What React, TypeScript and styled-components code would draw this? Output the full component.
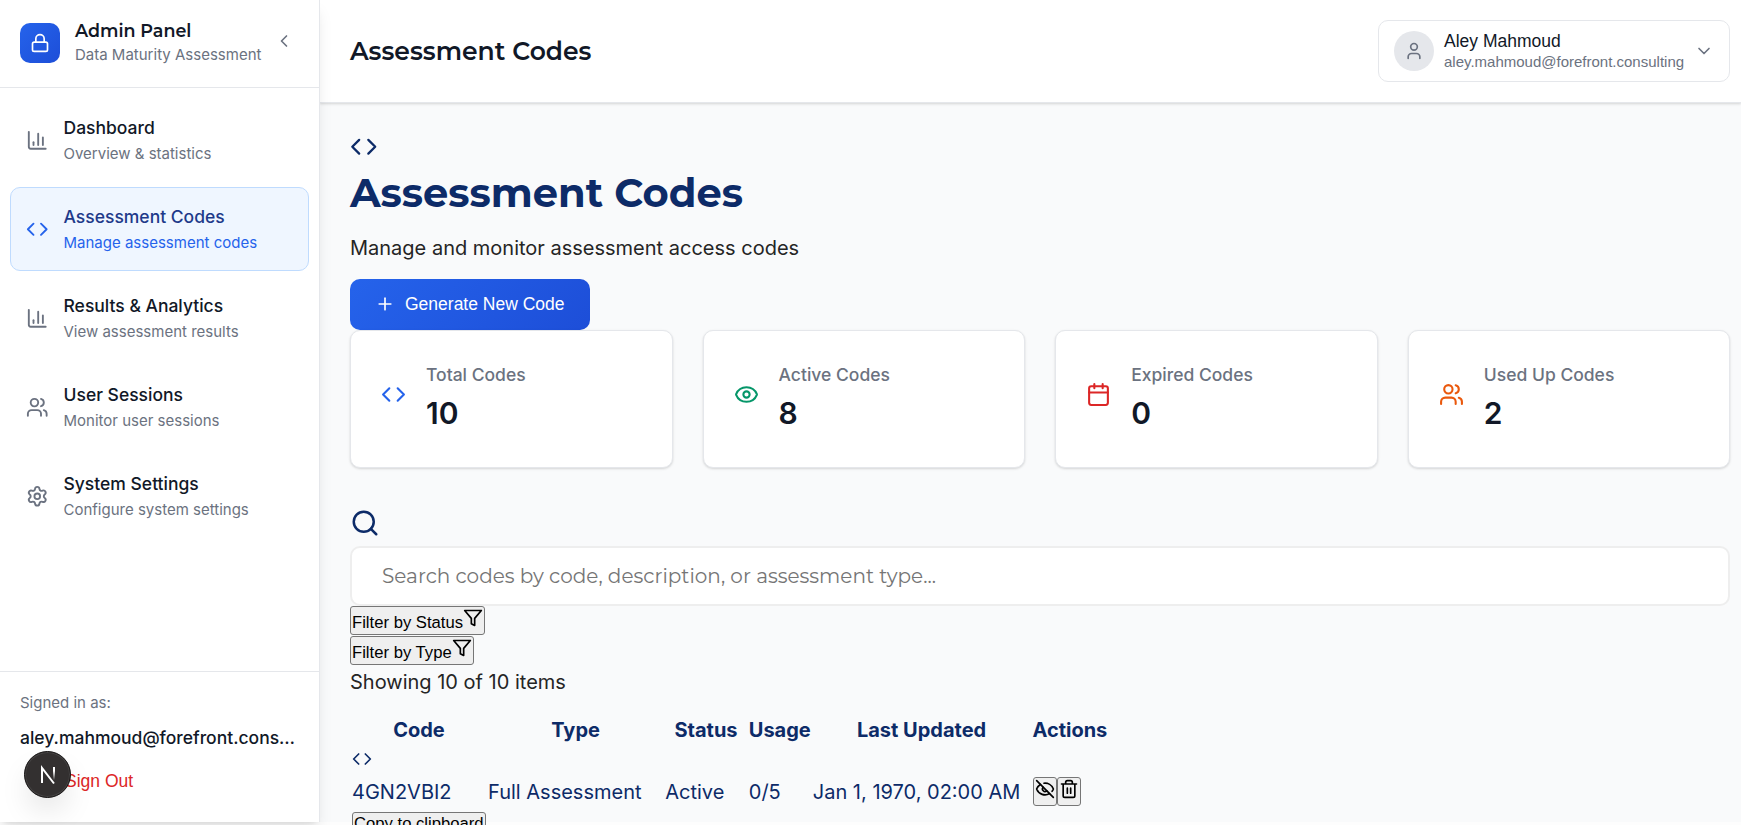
import React from 'react';
import styled, { createGlobalStyle } from 'styled-components';
import {
  Calendar,
  ChartColumn,
  ChevronDown,
  ChevronLeft,
  Code,
  Eye,
  EyeOff,
  Lock,
  LogOut,
  Plus,
  Search,
  Settings,
  User,
  Users,
} from 'lucide-react';
import type { LucideIcon } from 'lucide-react';

const sans = `Inter, 'Liberation Sans', sans-serif`;
const display = `Montserrat, Inter, sans-serif`;
const system = `'Liberation Sans', Arial, sans-serif`;

const GlobalStyle = createGlobalStyle`
  * { box-sizing: border-box; }
  html, body { margin: 0; padding: 0; }
  html { font-size: 20px; }
  body {
    height: 825px;
    overflow: hidden;
    background: #fdfdfd;
    color: #252525;
    font-family: ${sans};
    line-height: 30px;
  }
  h1, h2, p { margin: 0; }
`;

const Shell = styled.div`
  display: flex;
  height: 822px;
`;

const Sidebar = styled.aside`
  position: relative;
  z-index: 2;
  display: flex;
  flex-direction: column;
  flex: 0 0 320px;
  background: #fff;
  border-right: 1px solid #e5e7eb;
  box-shadow: 0 10px 15px -3px rgba(0, 0, 0, 0.1), 0 4px 6px -4px rgba(0, 0, 0, 0.1);
`;

const Brand = styled.div`
  display: flex;
  align-items: center;
  height: 88px;
  padding: 0 20px 1.5px;
  border-bottom: 1px solid #e5e7eb;
`;

const BrandMark = styled.div`
  display: flex;
  align-items: center;
  justify-content: center;
  width: 40px;
  height: 40px;
  margin-right: 15px;
  border-radius: 10px;
  background: linear-gradient(135deg, #2563eb, #1d4ed8);
  color: #fff;
`;

const BrandTitle = styled.div`
  font: 600 17.5px/24px ${display};
  color: #111827;
`;

const BrandSub = styled.div`
  font-size: 15px;
  line-height: 24px;
  color: #6b7280;
  white-space: nowrap;
`;

const Collapse = styled.span`
  display: flex;
  margin: 0 0 3px 13px;
  color: #6b7280;
`;

const Nav = styled.nav`
  display: flex;
  flex: 1;
  flex-direction: column;
  gap: 5px;
  padding: 10px;
`;

const NavItem = styled.a<{ $active?: boolean }>`
  display: flex;
  align-items: center;
  gap: 15px;
  height: 84px;
  padding: 0 15px;
  border: 1px solid ${(p) => (p.$active ? '#bfdbfe' : 'transparent')};
  border-radius: 10px;
  background: ${(p) => (p.$active ? '#eff6ff' : 'transparent')};
  color: ${(p) => (p.$active ? '#2563eb' : '#6b7280')};
`;

const NavText = styled.div``;

const NavName = styled.div<{ $active?: boolean }>`
  font-size: 17.5px;
  font-weight: 500;
  line-height: 27px;
  color: ${(p) => (p.$active ? '#1e3a8a' : '#111827')};
`;

const NavSub = styled.div`
  font-size: 15px;
  line-height: 25px;
`;

const Account = styled.div`
  height: 151px;
  padding: 19px 20px;
  border-top: 1px solid #e5e7eb;
`;

const AccountLabel = styled.div`
  font-size: 15px;
  line-height: 23px;
  color: #6b7280;
`;

const AccountEmail = styled.div`
  margin-top: 11px;
  font-size: 17.5px;
  font-weight: 500;
  line-height: 26px;
  white-space: nowrap;
  color: #111827;
`;

const SignOut = styled.div`
  display: flex;
  align-items: center;
  gap: 10px;
  margin-top: 17px;
  padding-left: 15px;
  font: 17.5px/26px ${system};
  color: #dc2626;
`;

const DevBadge = styled.div`
  position: fixed;
  left: 24px;
  top: 751px;
  z-index: 5;
  display: flex;
  align-items: center;
  justify-content: center;
  width: 47px;
  height: 47px;
  border: 1px solid #151313;
  border-radius: 50%;
  background: #333030;
  box-shadow: inset 0 0 0 1px #454343, 0 16px 32px -8px rgba(0, 0, 0, 0.18);
`;

const Main = styled.main`
  flex: 1;
  min-width: 0;
  background: #f9fafb;
`;

const TopBar = styled.header`
  display: flex;
  align-items: center;
  justify-content: space-between;
  height: 103px;
  padding: 0 11px 0 30px;
  background: #fff;
  border-bottom: 1px solid #e5e7eb;
  box-shadow: 0 1px 3px rgba(0, 0, 0, 0.1), 0 1px 2px rgba(0, 0, 0, 0.06);
`;

const TopTitle = styled.h1`
  font: 600 25px/38px ${display};
  color: #111827;
`;

const UserMenu = styled.div`
  display: flex;
  align-items: center;
  width: 352px;
  height: 62px;
  padding: 0 15px;
  border: 1px solid #e5e7eb;
  border-radius: 10px;
  color: #6b7280;
`;

const Avatar = styled.div`
  display: flex;
  align-items: center;
  justify-content: center;
  width: 40px;
  height: 40px;
  margin-right: 10px;
  border-radius: 50%;
  background: #e5e7eb;
`;

const UserText = styled.div`
  flex: 1;
  padding-top: 1px;
  white-space: nowrap;
`;

const UserName = styled.div`
  font: 17.5px/20px ${system};
  color: #111827;
`;

const UserEmail = styled.div`
  font: 15px/21px ${system};
`;

const Content = styled.section`
  padding: 30px 10.6px 0 30px;
  color: #0d2b68;
`;

const PageIcon = styled.div`
  display: flex;
  height: 31px;
  padding-bottom: 4px;
`;

const PageTitle = styled.h2`
  margin-top: 3px;
  font: 700 40px/52px ${display};
`;

const PageSub = styled.p`
  margin-top: 14px;
  font-size: 20px;
  line-height: 30px;
  color: #252525;
`;

const PrimaryButton = styled.button`
  display: flex;
  align-items: center;
  gap: 10px;
  width: 240px;
  height: 51px;
  margin: 16px 0 0;
  padding: 0 25px 1px;
  border: 0;
  border-radius: 10px;
  background: linear-gradient(135deg, #2563eb, #1d4ed8);
  color: #fff;
  font: 17.5px/24px ${system};
  white-space: nowrap;
`;

const Stats = styled.div`
  display: grid;
  grid-template-columns: repeat(4, 1fr);
  gap: 30px;
`;

const StatCard = styled.div`
  display: flex;
  align-items: center;
  gap: 20px;
  height: 138px;
  padding: 0 30px 10px;
  border: 1px solid #e5e7eb;
  border-radius: 10px;
  background: #fff;
  box-shadow: 0 1px 3px rgba(0, 0, 0, 0.1), 0 1px 2px rgba(0, 0, 0, 0.06);
`;

const StatIcon = styled.span<{ $color: string }>`
  display: flex;
  color: ${(p) => p.$color};
`;

const StatText = styled.div`
  padding-top: 9px;
`;

const StatLabel = styled.div`
  font-size: 17.5px;
  font-weight: 500;
  line-height: 26px;
  color: #6b7280;
`;

const StatValue = styled.div`
  margin-top: 3px;
  font-size: 30px;
  font-weight: 600;
  line-height: 45px;
  color: #111827;
`;

const SearchMark = styled.div`
  display: flex;
  height: 38px;
  margin-top: 40px;
`;

const SearchInput = styled.input`
  display: block;
  width: 100%;
  height: 60px;
  padding: 0 30px;
  border: 2px solid #eee;
  border-radius: 10px;
  background: #fff;
  font: 400 20px/30px ${display};
  &::placeholder { color: #757575; opacity: 1; }
`;

const FilterLine = styled.div`
  height: 30px;
  font-size: 20px;
  line-height: 30px;
  white-space: nowrap;
`;

const PlainButton = styled.button`
  margin: 0;
  padding: 1px;
  border: 1px solid #767676;
  border-radius: 3px;
  background: #efefef;
  color: #000;
  font: 16.667px ${system};
`;

const RowActions = styled.div`
  padding-left: 1px;
`;

const Count = styled.p`
  margin-top: 1px;
  font-size: 20px;
  color: #252525;
`;

const Table = styled.table`
  width: 750px;
  margin-top: 16px;
  border-spacing: 2px;
  table-layout: fixed;
  font-size: 20px;
  line-height: 30px;
  th, td { padding: 0; white-space: nowrap; }
  th { text-align: center; font-weight: 700; }
`;

const Col = styled.col<{ $w: number }>`
  width: ${(p) => p.$w}px;
`;

type Entry = { icon: LucideIcon; name: string; sub: string; active?: boolean };

const nav: Entry[] = [
  { icon: ChartColumn, name: 'Dashboard', sub: 'Overview & statistics' },
  { icon: Code, name: 'Assessment Codes', sub: 'Manage assessment codes', active: true },
  { icon: ChartColumn, name: 'Results & Analytics', sub: 'View assessment results' },
  { icon: Users, name: 'User Sessions', sub: 'Monitor user sessions' },
  { icon: Settings, name: 'System Settings', sub: 'Configure system settings' },
];

const stats: { icon: LucideIcon; color: string; label: string; value: string }[] = [
  { icon: Code, color: '#2563eb', label: 'Total Codes', value: '10' },
  { icon: Eye, color: '#059669', label: 'Active Codes', value: '8' },
  { icon: Calendar, color: '#dc2626', label: 'Expired Codes', value: '0' },
  { icon: Users, color: '#ea580c', label: 'Used Up Codes', value: '2' },
];

const columns = [
  { name: 'Code', width: 134 },
  { name: 'Type', width: 175.2 },
  { name: 'Status', width: 81.6 },
  { name: 'Usage', width: 62 },
  { name: 'Last Updated', width: 217.6 },
  { name: 'Actions', width: 75 },
];

const FilterIcon = () => (
  <svg width="20" height="20" viewBox="0 0 24 24" fill="none" stroke="currentColor" strokeWidth="2" strokeLinecap="round" strokeLinejoin="round">
    <path d="M22 3H2l8 9.46V19l4 2v-8.54z" />
  </svg>
);

const TrashIcon = () => (
  <svg width="20" height="20" viewBox="0 0 24 24" fill="none" stroke="currentColor" strokeWidth="2" strokeLinecap="round" strokeLinejoin="round">
    <path d="M3 6h18M19 6v14a2 2 0 0 1-2 2H7a2 2 0 0 1-2-2V6M8 6V4a2 2 0 0 1 2-2h4a2 2 0 0 1 2 2v2M10 11v6M14 11v6" />
  </svg>
);

export default function App() {
  return (
    <>
      <GlobalStyle />
      <Shell>
        <Sidebar>
          <Brand>
            <BrandMark><Lock size={20} /></BrandMark>
            <div>
              <BrandTitle>Admin Panel</BrandTitle>
              <BrandSub>Data Maturity Assessment</BrandSub>
            </div>
            <Collapse><ChevronLeft size={20} /></Collapse>
          </Brand>
          <Nav>
            {nav.map(({ icon: Icon, name, sub, active }) => (
              <NavItem key={name} $active={active}>
                <Icon size={22.5} />
                <NavText>
                  <NavName $active={active}>{name}</NavName>
                  <NavSub>{sub}</NavSub>
                </NavText>
              </NavItem>
            ))}
          </Nav>
          <Account>
            <AccountLabel>Signed in as:</AccountLabel>
            <AccountEmail>aley.mahmoud@forefront.cons…</AccountEmail>
            <SignOut><LogOut size={20} />Sign Out</SignOut>
          </Account>
        </Sidebar>
        <Main>
          <TopBar>
            <TopTitle>Assessment Codes</TopTitle>
            <UserMenu>
              <Avatar><User size={20} /></Avatar>
              <UserText>
                <UserName>Aley Mahmoud</UserName>
                <UserEmail>aley.mahmoud@forefront.consulting</UserEmail>
              </UserText>
              <ChevronDown size={20} />
            </UserMenu>
          </TopBar>
          <Content>
            <PageIcon><Code size={27.5} /></PageIcon>
            <PageTitle>Assessment Codes</PageTitle>
            <PageSub>Manage and monitor assessment access codes</PageSub>
            <PrimaryButton><Plus size={20} />Generate New Code</PrimaryButton>
            <Stats>
              {stats.map(({ icon: Icon, color, label, value }) => (
                <StatCard key={label}>
                  <StatIcon $color={color}><Icon size={25} /></StatIcon>
                  <StatText>
                    <StatLabel>{label}</StatLabel>
                    <StatValue>{value}</StatValue>
                  </StatText>
                </StatCard>
              ))}
            </Stats>
            <SearchMark><Search size={30} /></SearchMark>
            <SearchInput placeholder="Search codes by code, description, or assessment type..." />
            <FilterLine><PlainButton>Filter by Status<FilterIcon /></PlainButton></FilterLine>
            <FilterLine><PlainButton>Filter by Type<FilterIcon /></PlainButton></FilterLine>
            <Count>Showing 10 of 10 items</Count>
            <Table>
              <colgroup>
                {columns.map((c) => <Col key={c.name} $w={c.width} />)}
              </colgroup>
              <thead>
                <tr>{columns.map((c) => <th key={c.name}>{c.name}</th>)}</tr>
              </thead>
              <tbody>
                <tr>
                  <td>
                    <div><Code size={20} /></div>
                    <div>4GN2VBI2</div>
                    <div><PlainButton>Copy to clipboard</PlainButton></div>
                  </td>
                  <td>Full Assessment</td>
                  <td>Active</td>
                  <td>0/5</td>
                  <td>Jan 1, 1970, 02:00 AM</td>
                  <td>
                    <RowActions>
                      <PlainButton><EyeOff size={20} /></PlainButton>
                      <PlainButton><TrashIcon /></PlainButton>
                    </RowActions>
                  </td>
                </tr>
              </tbody>
            </Table>
          </Content>
        </Main>
      </Shell>
      <DevBadge>
        <svg width="18" height="20" viewBox="0 0 18 20" fill="none" strokeWidth="2">
          <defs>
            <linearGradient id="stem" x1="0" y1="0" x2="0" y2="1">
              <stop offset="0.3" stopColor="#fff" />
              <stop offset="1" stopColor="#fff" stopOpacity="0" />
            </linearGradient>
          </defs>
          <path d="M3 18V3L15 18.5" stroke="#fff" />
          <rect x="14" y="2" width="2" height="13" fill="url(#stem)" />
        </svg>
      </DevBadge>
    </>
  );
}
